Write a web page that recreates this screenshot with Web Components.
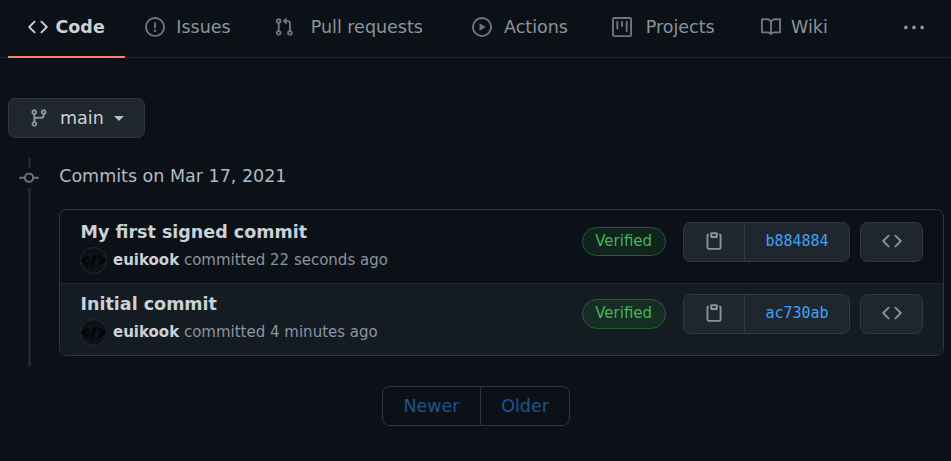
<!DOCTYPE html>
<html lang="en">
<head>
<meta charset="utf-8">
<title>Commits</title>
<style>
html,body{margin:0;height:100%;background:#0c1117;overflow:hidden}
body{font:17.5px/26px "DejaVu Sans",sans-serif;color:#c9d1d9}
</style>
</head>
<body>
<commits-page></commits-page>
<script>
const ICONS={
code:'M4.72 3.22a.75.75 0 011.06 1.06L2.06 8l3.72 3.72a.75.75 0 11-1.06 1.06L.47 8.53a.75.75 0 010-1.06l4.25-4.25zm6.56 0a.75.75 0 10-1.06 1.06L13.94 8l-3.72 3.72a.75.75 0 101.06 1.06l4.25-4.25a.75.75 0 000-1.06l-4.25-4.25z',
issue:'M8 1.5a6.5 6.5 0 100 13 6.5 6.5 0 000-13zM0 8a8 8 0 1116 0A8 8 0 010 8zm9 3a1 1 0 11-2 0 1 1 0 012 0zm-.25-6.25a.75.75 0 00-1.5 0v3.5a.75.75 0 001.5 0v-3.5z',
pull:'M7.177 3.073L9.573.677A.25.25 0 0110 .854v4.792a.25.25 0 01-.427.177L7.177 3.427a.25.25 0 010-.354zM3.75 2.5a.75.75 0 100 1.5.75.75 0 000-1.5zm-2.25.75a2.25 2.25 0 113 2.122v5.256a2.251 2.251 0 11-1.5 0V5.372A2.25 2.25 0 011.5 3.25zM11 2.5h-1V4h1a1 1 0 011 1v5.628a2.251 2.251 0 101.5 0V5A2.5 2.5 0 0011 2.5zm1 10.25a.75.75 0 111.5 0 .75.75 0 01-1.5 0zM3.75 12a.75.75 0 100 1.5.75.75 0 000-1.5z',
play:'M1.5 8a6.5 6.5 0 1113 0 6.5 6.5 0 01-13 0zM8 0a8 8 0 100 16A8 8 0 008 0zM6.379 5.227A.25.25 0 006 5.442v5.117a.25.25 0 00.379.214l4.264-2.559a.25.25 0 000-.428L6.379 5.227z',
project:'M1.75 0A1.75 1.75 0 000 1.75v12.5C0 15.216.784 16 1.75 16h12.5A1.75 1.75 0 0016 14.25V1.75A1.75 1.75 0 0014.25 0H1.75zM1.5 1.75a.25.25 0 01.25-.25h12.5a.25.25 0 01.25.25v12.5a.25.25 0 01-.25.25H1.75a.25.25 0 01-.25-.25V1.75zM11.75 3a.75.75 0 00-.75.75v7.5a.75.75 0 001.5 0v-7.5a.75.75 0 00-.75-.75zm-8.25.75a.75.75 0 011.5 0v5.5a.75.75 0 01-1.5 0v-5.5zM8 3a.75.75 0 00-.75.75v3.5a.75.75 0 001.5 0v-3.5A.75.75 0 008 3z',
book:'M0 1.75A.75.75 0 01.75 1h4.253c1.227 0 2.317.59 3 1.501A3.744 3.744 0 0111.006 1h4.245a.75.75 0 01.75.75v10.5a.75.75 0 01-.75.75h-4.507a2.25 2.25 0 00-1.591.659l-.622.621a.75.75 0 01-1.06 0l-.622-.621A2.25 2.25 0 005.258 13H.75a.75.75 0 01-.75-.75V1.75zm8.755 3a2.25 2.25 0 012.25-2.25H14.5v9h-3.757c-.71 0-1.4.201-1.992.572l.004-7.322zm-1.504 7.324l.004-5.073-.002-2.253A2.25 2.25 0 005.003 2.5H1.5v9h3.757a3.75 3.75 0 011.994.574z',
kebab:'M8 9a1.5 1.5 0 100-3 1.5 1.5 0 000 3zM1.5 9a1.5 1.5 0 100-3 1.5 1.5 0 000 3zm13 0a1.5 1.5 0 100-3 1.5 1.5 0 000 3z',
branch:'M11.75 2.5a.75.75 0 100 1.5.75.75 0 000-1.5zm-2.25.75a2.25 2.25 0 113 2.122V6A2.5 2.5 0 0110 8.5H6a1 1 0 00-1 1v1.128a2.251 2.251 0 11-1.5 0V5.372a2.25 2.25 0 111.5 0v1.836A2.492 2.492 0 016 7h4a1 1 0 001-1v-.628A2.25 2.25 0 019.5 3.25zM4.25 12a.75.75 0 100 1.5.75.75 0 000-1.5zM3.5 3.25a.75.75 0 111.5 0 .75.75 0 01-1.5 0z',
commit:'M10.5 7.75a2.5 2.5 0 11-5 0 2.5 2.5 0 015 0zm1.43.75a4.002 4.002 0 01-7.86 0H.75a.75.75 0 110-1.5h3.32a4.001 4.001 0 017.86 0h3.32a.75.75 0 110 1.5h-3.32z',
clip:'M5.75 1a.75.75 0 00-.75.75v3c0 .414.336.75.75.75h4.5a.75.75 0 00.75-.75v-3a.75.75 0 00-.75-.75h-4.5zm.75 3V2.5h3V4h-3zm-2.874-.467a.75.75 0 00-.752-1.298A1.75 1.75 0 002 3.75v9.5c0 .966.784 1.75 1.75 1.75h8.5A1.75 1.75 0 0014 13.25v-9.5a1.75 1.75 0 00-.874-1.515.75.75 0 10-.752 1.298.25.25 0 01.126.217v9.5a.25.25 0 01-.25.25h-8.5a.25.25 0 01-.25-.25v-9.5a.25.25 0 01.126-.217z'
};
const define=(name,render)=>customElements.define(name,class extends HTMLElement{
  connectedCallback(){
    if(!this.shadowRoot)this.attachShadow({mode:'open'}).innerHTML=
      '<style>*{box-sizing:border-box}:host{box-sizing:border-box}</style>'+render(this);
  }
});

define('oct-icon',el=>`<style>:host{display:block;flex:none;width:20px;height:20px}svg{display:block}</style>
<svg width="20" height="20" viewBox="0 0 16 16" fill="currentColor" fill-rule="evenodd"><path d="${ICONS[el.getAttribute('name')]}"/></svg>`);

define('nav-tab',el=>`<style>
:host{display:flex;align-items:center;height:58px;padding-bottom:4px;color:#8b949e;white-space:nowrap}
:host([active]){color:#c9d1d9;font-weight:700;padding-left:20px;border-bottom:2px solid #f9826c;padding-bottom:2px}
oct-icon{color:#6e7681;margin-right:var(--gap,11px)}
:host([active]) oct-icon{color:inherit}
</style><oct-icon name="${el.getAttribute('icon')}"></oct-icon><slot></slot>`);

define('repo-nav',()=>`<style>
:host{display:grid;grid-template-columns:117px 20px 129px 198px 140px 149px 143px 1fr;height:58px;padding-left:8px;
background:linear-gradient(#21262d,#21262d) 0 57px/100% 1px no-repeat}
nav-tab:nth-of-type(n+2){grid-row:1}
.more{grid-column:8;margin-top:18px;color:#8b949e}
</style>
<nav-tab active icon="code" style="--gap:7.5px">Code</nav-tab>
<nav-tab icon="issue" style="grid-column:3;--gap:11.3px">Issues</nav-tab>
<nav-tab icon="pull" style="grid-column:4;--gap:16.7px">Pull requests</nav-tab>
<nav-tab icon="play" style="grid-column:5;--gap:12px">Actions</nav-tab>
<nav-tab icon="project" style="grid-column:6;--gap:13.7px">Projects</nav-tab>
<nav-tab icon="book" style="grid-column:7;--gap:10px">Wiki</nav-tab>
<oct-icon class="more" name="kebab"></oct-icon>`);

define('branch-button',()=>`<style>
:host{display:flex;align-items:center;width:137px;height:40px;margin:40px 0 0 8px;padding-left:20px;
background:#20262d;border:1px solid #32383f;border-radius:7.5px}
oct-icon{color:#8b949e;margin-right:11px}
i{margin:1px 0 0 10px;border:5px solid transparent;border-top-color:#b6bec6;border-bottom:0}
</style><oct-icon name="branch"></oct-icon><slot></slot><i></i>`);

define('commit-avatar',()=>`<style>:host{display:block;flex:none;width:27px;height:27px;white-space:normal}svg{display:block}</style>
<svg width="27" height="27" viewBox="0 0 27 27" fill="none"><circle cx="13.5" cy="13.5" r="13" fill="#0c1117" stroke="#272b32"/>
<path d="M8.5 9.5L2 13.5l6.5 4M18.5 9.5l6.5 4-6.5 4M15.2 8.5l-3.4 10" stroke="#010203" stroke-width="2.2"/></svg>`);

define('commit-row',el=>`<style>
:host{display:flex;height:73px;padding:0 20px 0 20px}
:host([shaded]){height:72px;background:#151b22;border-top:1px solid #21262d;border-radius:0 0 6.5px 6.5px}
.info{flex:1;padding-top:9px}
:host([shaded]) .info{padding-top:7px}
b{display:block;height:26px;line-height:26px;padding-left:.5px}
.meta{display:flex;align-items:flex-start;height:29px;padding-top:2px;font-size:15px;line-height:26px;color:#8b949e;white-space:pre}
.meta commit-avatar{margin:0 6px 0 0}
.meta strong{color:#c9d1d9}
.badge{width:84px;height:29px;margin:17px 17px 0 0;border:1px solid #245f33;border-radius:15px;
background:rgba(46,160,67,.13);color:#3fb950;font-size:15px;line-height:26px;text-align:center;text-indent:-.6px}
.group,.browse{display:flex;height:40px;margin-top:12px;background:#20262d;border:1px solid #32383f;border-radius:7.5px;color:#8b949e}
:host([shaded]) .badge{margin-top:15px;height:30px}
:host([shaded]) .group,:host([shaded]) .browse{margin-top:10px}
.group{width:167px;margin-right:10px}
.copy{width:61px;border-right:1px solid #32383f;padding:8px 0 0 20px}
.sha{flex:1;text-align:center;font:15px/36px "DejaVu Sans Mono",monospace;color:#3da2f8}
.browse{width:63px;padding:8px 0 0 21px}
</style>
<div class="info"><b>${el.getAttribute('heading')}</b><div class="meta"><commit-avatar></commit-avatar><strong>euikook</strong><span> committed <slot></slot></span></div></div>
<div class="badge">Verified</div>
<div class="group"><div class="copy"><oct-icon name="clip"></oct-icon></div><div class="sha">${el.getAttribute('sha')}</div></div>
<div class="browse"><oct-icon name="code"></oct-icon></div>`);

define('commit-timeline',()=>`<style>
:host{display:flex;height:208px;margin-top:20px;padding:0 7px 0 19px}
.rail{display:flex;flex-direction:column;width:20px;margin-right:20px;color:#6e7681}
.rail::before,.rail::after{content:"";width:3px;margin-left:9px;background:#21262d}
.rail::before{height:10px}.rail::after{flex:1}
.main{flex:1}
h2{margin:5px 0 20px;font-size:17.5px;line-height:26px;font-weight:400;color:#b1bac4;text-indent:.2px}
.box{height:147px;border:1px solid #30363d;border-radius:7.5px}
</style>
<div class="rail"><oct-icon name="commit"></oct-icon></div>
<div class="main"><h2>Commits on Mar 17, 2021</h2><div class="box"><slot></slot></div></div>`);

define('page-links',()=>`<style>
:host{display:flex;width:188px;height:40px;margin:20px 0 0 382px;border:1px solid #30363d;border-radius:7.5px;color:#1f558d;line-height:38px;text-align:center}
span{width:98px;border-right:1px solid #30363d}span+span{flex:1;border:0}
</style><span>Newer</span><span>Older</span>`);

define('commits-page',()=>`<style>:host{display:block}</style>
<repo-nav></repo-nav>
<branch-button>main</branch-button>
<commit-timeline>
<commit-row heading="My first signed commit" sha="b884884">22 seconds ago</commit-row>
<commit-row shaded heading="Initial commit" sha="ac730ab">4 minutes ago</commit-row>
</commit-timeline>
<page-links></page-links>`);
</script>
</body>
</html>
